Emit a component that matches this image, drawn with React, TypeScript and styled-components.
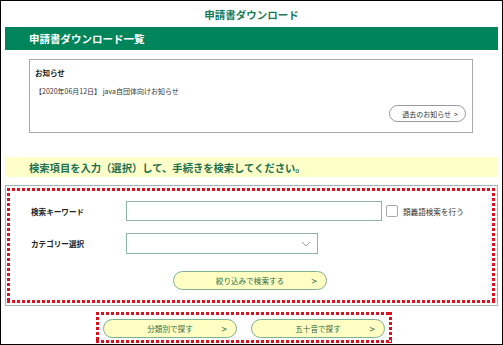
import React from "react";
import styled, { createGlobalStyle } from "styled-components";

const Global = createGlobalStyle`
  html, body { margin: 0; padding: 0; background: #fff; }
  * { box-sizing: border-box; }
  body { font-family: "Noto Sans CJK JP", "Noto Sans", sans-serif; }
`;

const Frame = styled.div`
  width: 503px;
  height: 345px;
  border: 1px solid #000;
  display: flex;
  flex-direction: column;
  overflow: hidden;
`;

const PageTitle = styled.div`
  height: 26px;
  display: flex;
  align-items: center;
  justify-content: center;
  color: #1b7a5a;
  font-weight: 700;
  font-size: 10.5px;
`;

const GreenBar = styled.div`
  margin: 0 4px;
  height: 23px;
  background: #00855b;
  color: #fff;
  font-weight: 700;
  font-size: 10.5px;
  display: flex;
  align-items: center;
  padding-left: 24px;
`;

const Notice = styled.div`
  margin: 9px 29px 0 28px;
  height: 74px;
  border: 1px solid #a9a9a9;
  padding: 7px 6px 0 5px;
  display: flex;
  flex-direction: column;
`;

const NoticeTitle = styled.div`
  font-size: 7.5px;
  font-weight: 700;
  color: #222;
  line-height: 12px;
`;

const NoticeItem = styled.div`
  margin-top: 7px;
  font-size: 7px;
  color: #333;
  line-height: 10px;
`;

const NoticeFooter = styled.div`
  display: flex;
  justify-content: flex-end;
  margin-top: 9px;
`;

const PastButton = styled.div`
  width: 77px;
  height: 17px;
  border: 1px solid #999;
  border-radius: 9px;
  background: #fff;
  font-size: 7px;
  color: #333;
  display: flex;
  align-items: center;
  justify-content: flex-end;
  padding-right: 7px;
  gap: 3px;
`;

const YellowBar = styled.div`
  margin: 24px 4px 0 4px;
  height: 20px;
  background: #ffffca;
  color: #1b7050;
  font-weight: 700;
  font-size: 10.3px;
  display: flex;
  align-items: center;
  padding-left: 24px;
`;

const dotted = (c: string) => `
  background:
    linear-gradient(90deg, ${c} 60%, transparent 0) top left / 5px 3px repeat-x,
    linear-gradient(90deg, ${c} 60%, transparent 0) bottom left / 5px 3px repeat-x,
    linear-gradient(180deg, ${c} 60%, transparent 0) top left / 3px 5px repeat-y,
    linear-gradient(180deg, ${c} 60%, transparent 0) top right / 3px 5px repeat-y;
`;

const SearchPanel = styled.div`
  margin: 8px 4px 0 4px;
  border: 1px solid #9fb8b2;
  padding: 2px 2px 2px 1px;
`;

const SearchInner = styled.div`
  ${dotted("#d8121f")}
  padding: 13px 0 13px 24px;
  display: flex;
  flex-direction: column;
`;

const FieldRow = styled.div<{ $mt?: number }>`
  display: flex;
  align-items: center;
  margin-top: ${(p) => p.$mt ?? 0}px;
`;

const Label = styled.div`
  width: 95px;
  font-size: 7.6px;
  font-weight: 700;
  color: #222;
`;

const TextBox = styled.div`
  width: 256px;
  height: 20px;
  border: 1px solid #8fb3aa;
  background: #fff;
`;

const Check = styled.div`
  width: 12px;
  height: 12px;
  border: 1px solid #aaa;
  border-radius: 2px;
  margin-left: 4px;
  background: #fff;
`;

const CheckLabel = styled.div`
  margin-left: 5px;
  font-size: 7.6px;
  color: #333;
`;

const SelectBox = styled.div`
  width: 192px;
  height: 21px;
  border: 1px solid #8fb3aa;
  background: #fff;
  display: flex;
  align-items: center;
  justify-content: flex-end;
  padding-right: 6px;
`;

const ButtonRow = styled.div`
  display: flex;
  justify-content: center;
  margin-top: 17px;
  padding-right: 26px;
`;

const PillButton = styled.div<{ $w: number }>`
  width: ${(p) => p.$w}px;
  height: 19px;
  border: 1px solid #7fb090;
  border-radius: 10px;
  background: #ffffc4;
  color: #2c6b48;
  font-size: 7.6px;
  display: flex;
  align-items: center;
  position: relative;
  justify-content: center;
`;

const Arrow = styled.span`
  position: absolute;
  right: 9px;
  top: 50%;
  transform: translateY(-52%);
  font-size: 10px;
  color: #2c6b48;
`;

const BottomWrap = styled.div`
  display: flex;
  justify-content: flex-start;
  padding-left: 95px;
  margin-top: 6px;
`;

const BottomBox = styled.div`
  ${dotted("#d8121f")}
  padding: 7px 7px 5px 7px;
  display: flex;
  gap: 14px;
`;

const Chevron = () => (
  <svg width="10" height="6" viewBox="0 0 10 6">
    <path d="M1 1 L5 5 L9 1" fill="none" stroke="#999" strokeWidth="1" />
  </svg>
);

export default function App() {
  return (
    <>
      <Global />
      <Frame>
        <PageTitle>申請書ダウンロード</PageTitle>
        <GreenBar>申請書ダウンロード一覧</GreenBar>
        <Notice>
          <NoticeTitle>お知らせ</NoticeTitle>
          <NoticeItem>【2020年06月12日】 java自団体向けお知らせ</NoticeItem>
          <NoticeFooter>
            <PastButton>
              過去のお知らせ<span>&gt;</span>
            </PastButton>
          </NoticeFooter>
        </Notice>
        <YellowBar>検索項目を入力（選択）して、手続きを検索してください。</YellowBar>
        <SearchPanel>
          <SearchInner>
            <FieldRow>
              <Label>検索キーワード</Label>
              <TextBox />
              <Check />
              <CheckLabel>類義語検索を行う</CheckLabel>
            </FieldRow>
            <FieldRow $mt={12}>
              <Label>カテゴリー選択</Label>
              <SelectBox>
                <Chevron />
              </SelectBox>
            </FieldRow>
            <ButtonRow>
              <PillButton $w={154}>
                絞り込みで検索する<Arrow>&gt;</Arrow>
              </PillButton>
            </ButtonRow>
          </SearchInner>
        </SearchPanel>
        <BottomWrap>
          <BottomBox>
            <PillButton $w={134}>
              分類別で探す<Arrow>&gt;</Arrow>
            </PillButton>
            <PillButton $w={134}>
              五十音で探す<Arrow>&gt;</Arrow>
            </PillButton>
          </BottomBox>
        </BottomWrap>
      </Frame>
    </>
  );
}
